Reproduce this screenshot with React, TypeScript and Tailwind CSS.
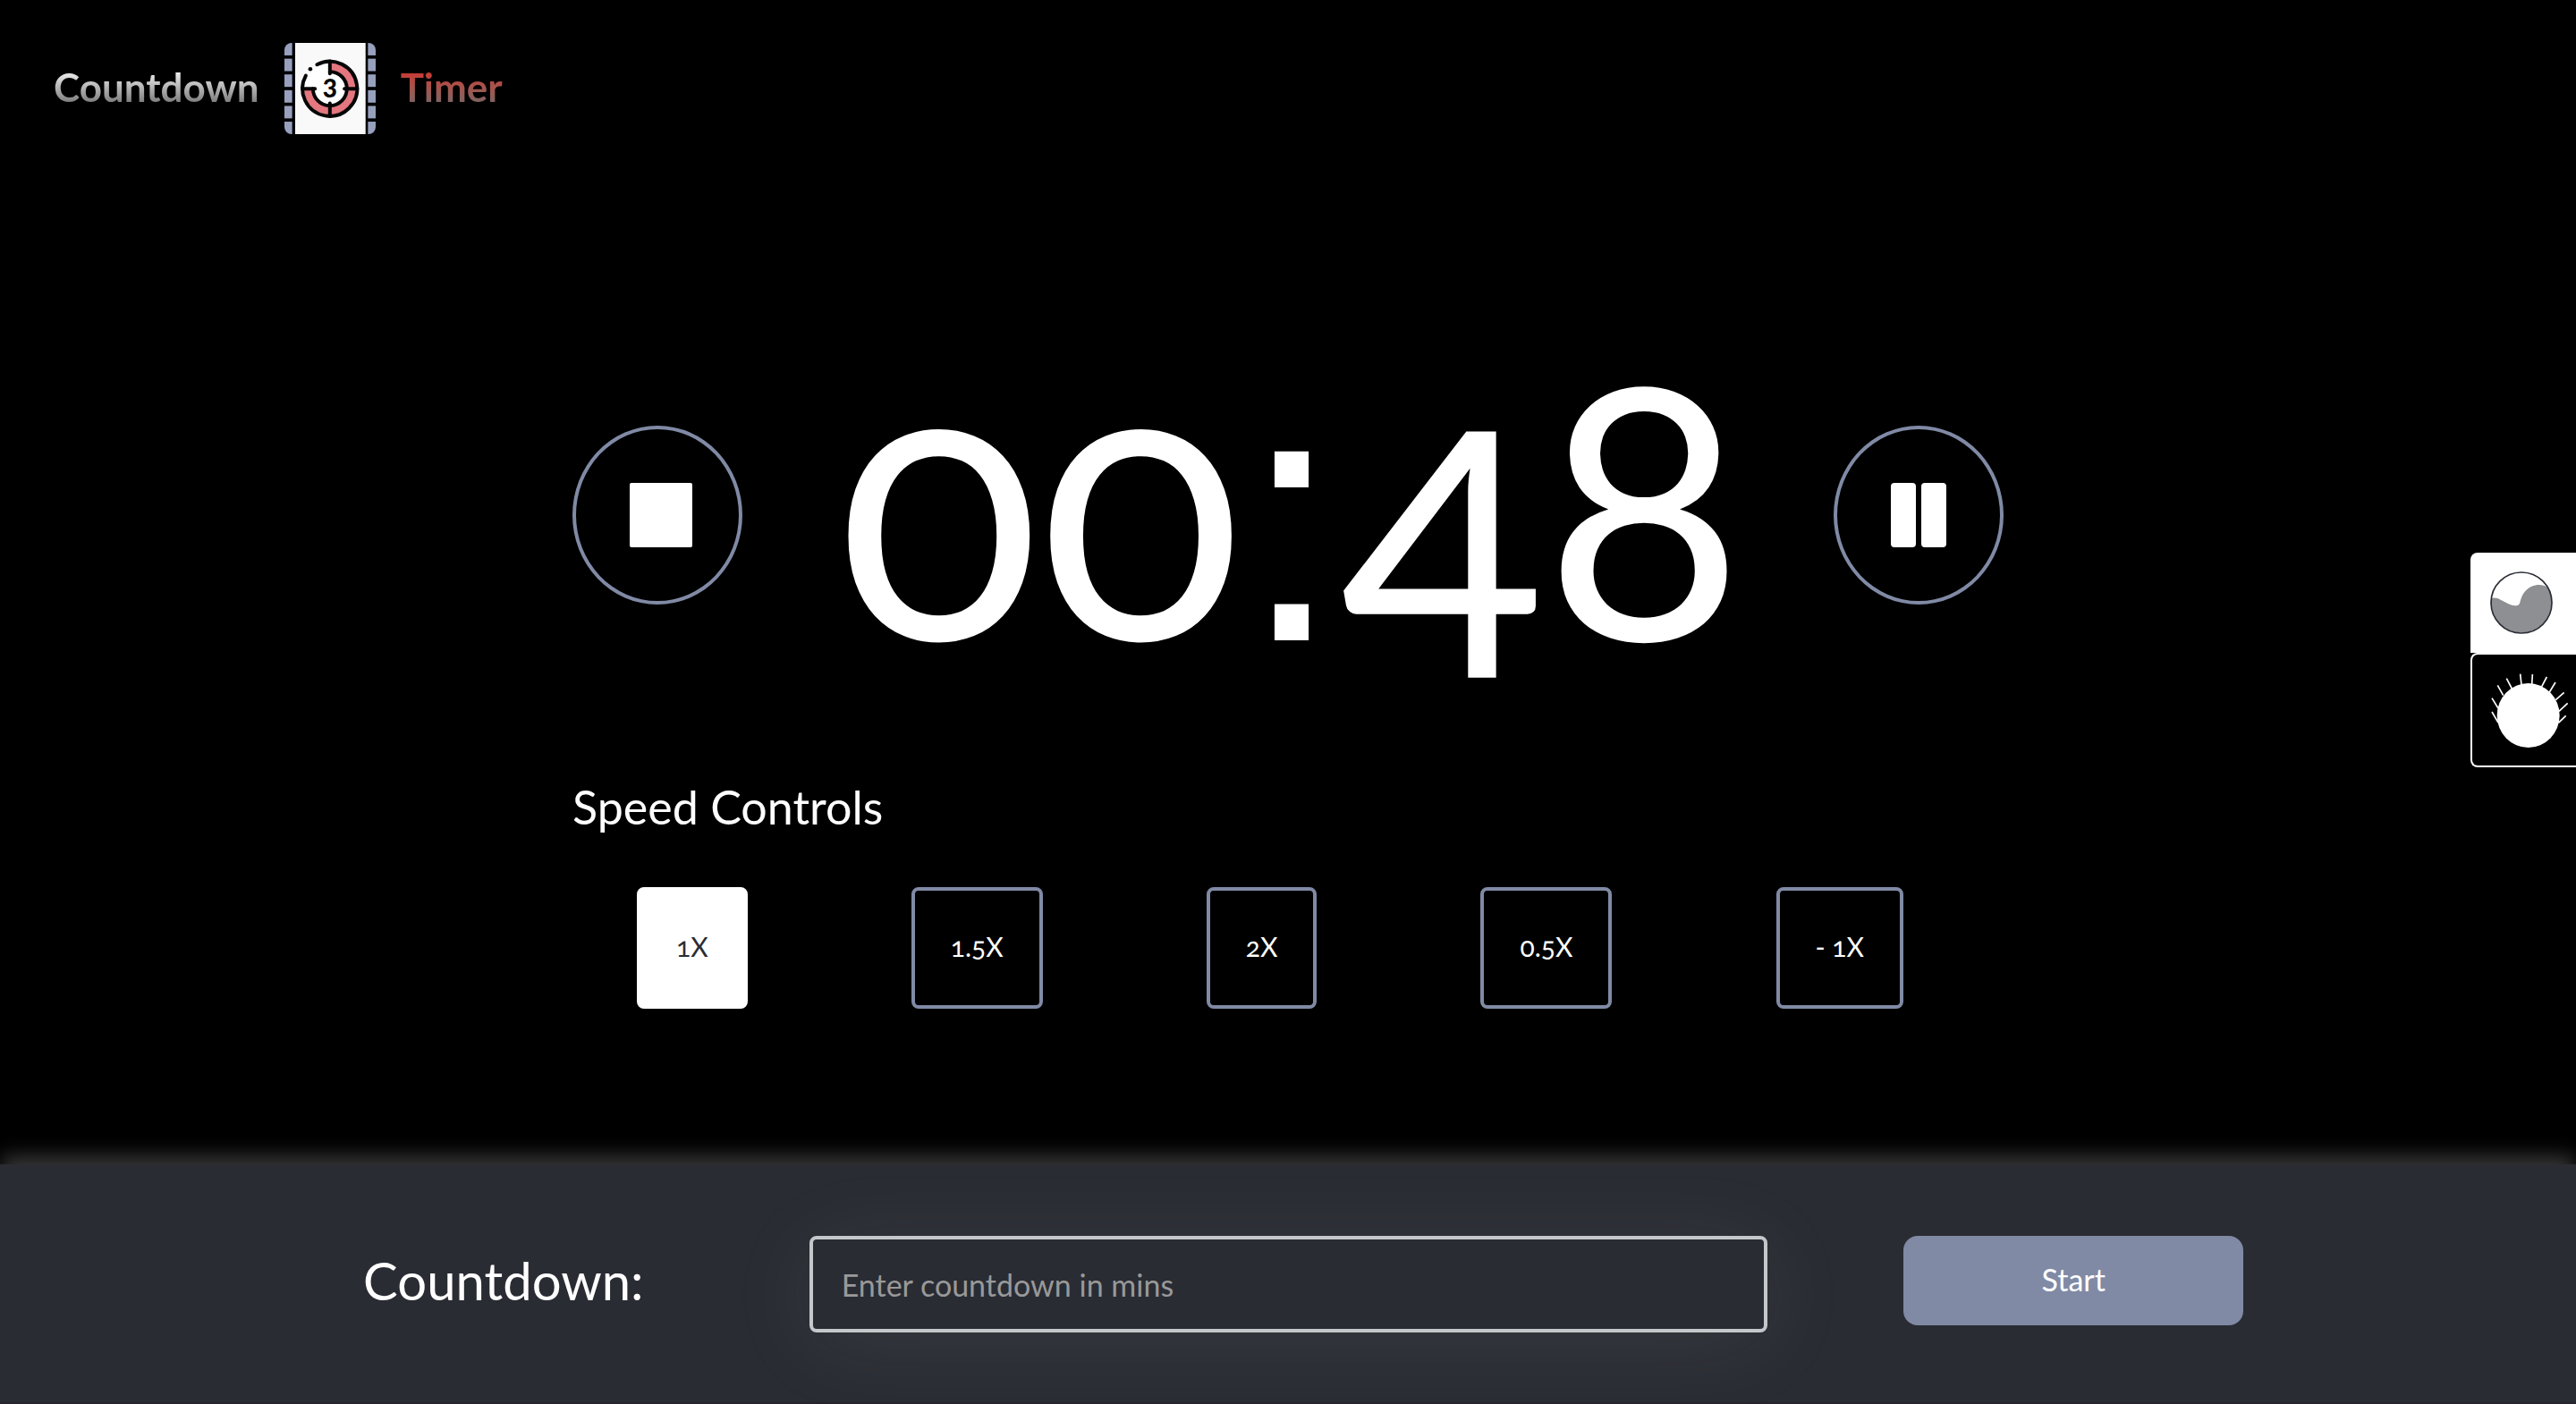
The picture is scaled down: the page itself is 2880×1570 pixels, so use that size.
import { useState } from 'react';

const speeds = ['1X', '1.5X', '2X', '0.5X', '- 1X'];
const perforations = [35, 88, 141, 194, 247, 300];

function Logo() {
  return (
    <svg className="size-[102px]" viewBox="52 35 307 307" aria-hidden="true">
      <defs>
        <clipPath id="film">
          <rect x="52" y="35" width="307" height="307" rx="24" />
        </clipPath>
      </defs>
      <g clipPath="url(#film)" fill="#97a0bd">
        {perforations.map((y) => (
          <g key={y}>
            <rect x="52" y={y} width="26" height="42" />
            <rect x="333" y={y} width="26" height="42" />
          </g>
        ))}
      </g>
      <rect x="88" y="35" width="237" height="307" fill="#f9f9f9" />
      <circle cx="205" cy="189" r="90" fill="#fff" />
      <path d="M205 114.500A74.500 74.500 0 1 1 130.500 189" fill="none" stroke="#e4767f" strokeWidth="27" />
      <g fill="none" stroke="#060606" strokeWidth="12" strokeLinecap="round">
        <path d="M161.500 108A92 92 0 1 1 124 145" />
        <path d="M205 132A57 57 0 1 1 148 189" />
        <path d="M205 97V138M113 189H155M205 238V281M254 189H297" />
      </g>
      <circle cx="139" cy="123" r="7" fill="#060606" />
      <text
        className="lining-nums"
        x="205"
        y="220"
        textAnchor="middle"
        fontFamily="Lato, sans-serif"
        fontWeight="900"
        fontSize="84"
        fill="#060606"
      >
        3
      </text>
    </svg>
  );
}

function WaveIcon() {
  return (
    <svg className="size-[70px]" viewBox="132 120 210 210" aria-hidden="true">
      <path
        d="M135 212C148 204 162 212 182 223C204 235 224 241 231 227C235 213 238 199 250 186C269 164 302 158 325 173A102 102 0 1 1 135 212Z"
        fill="#8e8f93"
      />
      <circle cx="237" cy="225" r="102" fill="none" stroke="#2a2c35" strokeWidth="5" />
    </svg>
  );
}

function SunIcon() {
  return (
    <svg className="h-[88px] w-[90px]" viewBox="130 450 270 264" aria-hidden="true">
      <ellipse cx="261" cy="600" rx="105" ry="108" fill="#fff" />
      <path
        d="M139 588L160 624M139 542L160 576M158 499L177 533M188 476L206 510M234 461L238 497M275 462L273 497M323 471L305 505M352 489L332 522M381 523L353 548M393 559L364 586M387 601L362 625"
        fill="none"
        stroke="#fff"
        strokeWidth="5"
      />
    </svg>
  );
}

export default function App() {
  const [speed, setSpeed] = useState('1X');
  const [minutes, setMinutes] = useState('');

  return (
    <div className="flex min-h-screen flex-col bg-black font-['Lato',sans-serif] text-white oldstyle-nums">
      <header className="flex items-center gap-7 px-[60px] pt-12 text-[44px] leading-[52px] font-bold">
        <span className="mb-1 bg-linear-to-b from-white from-10% to-[#747474] to-90% bg-clip-text text-transparent">Countdown</span>
        <Logo />
        <span className="mb-1 bg-linear-to-b from-[#d22a2a] from-10% to-[#756565] to-90% bg-clip-text text-transparent">Timer</span>
      </header>

      <main className="mx-auto w-5/9 flex-1 pt-[192px]">
        <div className="flex items-start justify-between">
          <button
            type="button"
            aria-label="Stop"
            className="mt-[134px] flex h-[200px] w-[190px] items-center justify-center rounded-[50%] border-4 border-[#808aa5]"
          >
            <span className="ml-2 h-[72px] w-[70px] rounded-xs bg-white" />
          </button>
          <h1 className="ml-2 flex h-[424px] items-baseline text-[418px] leading-[424px]">
            <span>00</span>
            <span className="font-['Liberation_Sans',sans-serif] text-[400px]">:</span>
            <span>48</span>
          </h1>
          <button
            type="button"
            aria-label="Pause"
            className="mt-[134px] flex h-[200px] w-[190px] items-center justify-center gap-1.5 rounded-[50%] border-4 border-[#808aa5]"
          >
            <span className="h-[72px] w-7 rounded-sm bg-white" />
            <span className="h-[72px] w-7 rounded-sm bg-white" />
          </button>
        </div>

        <h2 className="mt-[106px] text-[52px] leading-[60px]">Speed Controls</h2>
        <div className="mt-[60px] flex justify-between pr-28 pl-[72px]">
          {speeds.map((s) => (
            <button
              key={s}
              type="button"
              onClick={() => setSpeed(s)}
              className={
                s === speed
                  ? 'h-[136px] rounded-lg border-4 border-white bg-white px-10 pb-1 text-[30px] text-[#2a2c35]'
                  : 'h-[136px] rounded-lg border-4 border-[#808aa5] px-10 pb-1 text-[30px]'
              }
            >
              {s}
            </button>
          ))}
        </div>
      </main>

      <aside className="absolute top-[618px] right-0 w-[118px]">
        <button type="button" aria-label="Wave theme" className="flex h-28 w-full items-center rounded-tl-lg bg-white pl-[22px]">
          <WaveIcon />
        </button>
        <button
          type="button"
          aria-label="Sun theme"
          className="flex h-32 w-full rounded-l-lg border-2 border-r-0 border-white bg-black pt-[18px] pl-[19px]"
        >
          <SunIcon />
        </button>
      </aside>

      <footer className="border-b-2 border-[#28242d] bg-[#2a2c34] pt-20 pb-[78px] shadow-[0_-12px_20px_-2px_#363636]">
        <form className="grid grid-cols-[498fr_1070fr_152fr_380fr] items-start pr-[12.9%] pl-[14.1%]" onSubmit={(e) => e.preventDefault()}>
          <label htmlFor="minutes" className="text-[58px] leading-[100px]">
            Countdown:
          </label>
          <input
            id="minutes"
            type="text"
            value={minutes}
            onChange={(e) => setMinutes(e.target.value)}
            placeholder="Enter countdown in mins"
            className="h-[108px] w-full rounded-lg border-4 border-[#c4c8ca] bg-[#2a2c34] px-8 text-[34px] shadow-[0_12px_100px_rgba(200,230,190,0.08)] outline-none placeholder:text-[#999999]"
          />
          <button type="submit" className="col-start-4 h-[100px] rounded-2xl bg-[#808aa5] pb-1 text-[34px]">
            Start
          </button>
        </form>
      </footer>
    </div>
  );
}
